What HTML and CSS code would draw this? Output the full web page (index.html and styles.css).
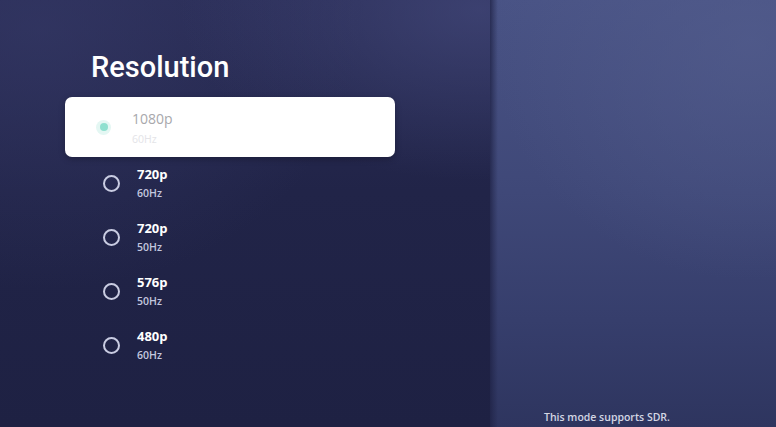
FILE: index.html
```html
<!DOCTYPE html>
<html lang="en">
<head>
<meta charset="utf-8">
<title>Resolution</title>
<link rel="stylesheet" href="styles.css">
</head>
<body>
<div class="screen">
  <section class="menu">
    <h1 class="title">Resolution</h1>
    <div class="list">
      <div class="item selected">
        <span class="radio on"><span class="dot"></span></span>
        <div class="labels">
          <div class="name">1080p</div>
          <div class="sub">60Hz</div>
        </div>
      </div>
      <div class="item">
        <span class="radio"></span>
        <div class="labels">
          <div class="name">720p</div>
          <div class="sub">60Hz</div>
        </div>
      </div>
      <div class="item">
        <span class="radio"></span>
        <div class="labels">
          <div class="name">720p</div>
          <div class="sub">50Hz</div>
        </div>
      </div>
      <div class="item">
        <span class="radio"></span>
        <div class="labels">
          <div class="name">576p</div>
          <div class="sub">50Hz</div>
        </div>
      </div>
      <div class="item">
        <span class="radio"></span>
        <div class="labels">
          <div class="name">480p</div>
          <div class="sub">60Hz</div>
        </div>
      </div>
    </div>
  </section>
  <aside class="info">
    <p class="note">This mode supports SDR.</p>
  </aside>
</div>
</body>
</html>
```

FILE: styles.css
```css
* { box-sizing: border-box; }
html, body {
  margin: 0;
  padding: 0;
  width: 776px;
  height: 427px;
  overflow: hidden;
  background: #1f2244;
}
.screen {
  display: flex;
  width: 776px;
  height: 427px;
  font-family: "Open Sans", "Noto Sans", sans-serif;
}
.menu {
  width: 490px;
  height: 427px;
  padding: 50px 0 0 65px;
  background:
    radial-gradient(ellipse 300px 170px at 480px 10px, rgba(72,78,130,0.6), rgba(72,78,130,0) 100%),
    radial-gradient(ellipse 320px 260px at 40px 30px, rgba(54,58,104,0.6), rgba(54,58,104,0) 100%),
    linear-gradient(180deg, #292c55 0%, #212448 45%, #1e2143 100%);
}
.title {
  margin: 0 0 12px 26px;
  font-family: Roboto, "Open Sans", sans-serif;
  font-size: 29px;
  font-weight: 500;
  line-height: 35px;
  color: #ffffff;
  letter-spacing: 0;
}
.list {
  display: flex;
  flex-direction: column;
}
.item {
  display: flex;
  align-items: center;
  height: 54px;
  padding-left: 38px;
}
.item.selected {
  width: 330px;
  height: 60px;
  margin-bottom: -1px;
  padding-left: 31px;
  background: #ffffff;
  border-radius: 7px;
  box-shadow: 0 2px 6px rgba(0,0,0,0.25);
}
.radio {
  flex: none;
  width: 17px;
  height: 17px;
  border: 2px solid #c9cce2;
  border-radius: 50%;
  margin-right: 17px;
}
.radio.on {
  display: flex;
  align-items: center;
  justify-content: center;
  width: 15px;
  height: 15px;
  border: none;
  background: #e4f7f3;
  margin-right: 21px;
}
.radio.on .dot {
  width: 8px;
  height: 8px;
  border-radius: 50%;
  background: #8fe0cf;
}
.labels {
  display: flex;
  flex-direction: column;
}
.name {
  font-size: 13px;
  font-weight: 700;
  line-height: 16px;
  color: #ffffff;
}
.sub {
  margin-top: 5px;
  font-size: 10.5px;
  font-weight: 600;
  line-height: 13px;
  color: #c3c7df;
}
.selected .labels { margin-top: 2px; }
.selected .name {
  font-size: 14px;
  font-weight: 400;
  color: #a8a8ac;
  line-height: 17px;
}
.selected .sub {
  margin-top: 6px;
  font-weight: 400;
  color: #e4e4e8;
}
.info {
  flex: 1;
  height: 427px;
  display: flex;
  flex-direction: column;
  justify-content: flex-end;
  padding: 0 0 3px 54px;
  background:
    linear-gradient(90deg, rgba(30,33,68,0.75) 0px, rgba(30,33,68,0.35) 4px, rgba(30,33,68,0) 8px),
    radial-gradient(ellipse 260px 240px at 260px 40px, rgba(82,92,140,0.7), rgba(82,92,140,0) 100%),
    linear-gradient(180deg, #495385 0%, #3f4878 45%, #363e6c 75%, #2e355f 100%);
}
.note {
  margin: 0;
  font-size: 10.5px;
  font-weight: 600;
  line-height: 14px;
  color: #d4d6e4;
}
```
